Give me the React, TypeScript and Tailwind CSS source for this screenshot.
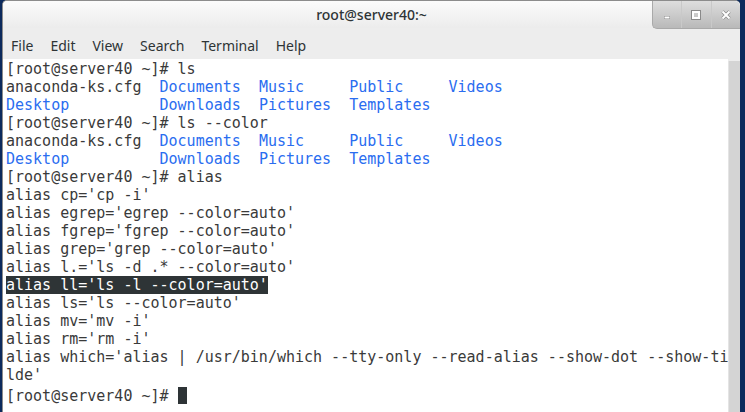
import React from "react"

const mono = { fontFamily: '"DejaVu Sans Mono", monospace' }

type Seg = { t: string; blue?: boolean }

const lsOut: Seg[][] = [
    [{ t: "anaconda-ks.cfg  " }, { t: "Documents", blue: true }, { t: "  " }, { t: "Music", blue: true }, { t: "     " }, { t: "Public", blue: true }, { t: "     " }, { t: "Videos", blue: true }],
    [{ t: "Desktop", blue: true }, { t: "          " }, { t: "Downloads", blue: true }, { t: "  " }, { t: "Pictures", blue: true }, { t: "  " }, { t: "Templates", blue: true }],
]

const aliases = [
    "alias cp='cp -i'",
    "alias egrep='egrep --color=auto'",
    "alias fgrep='fgrep --color=auto'",
    "alias grep='grep --color=auto'",
    "alias l.='ls -d .* --color=auto'",
]

const aliases2 = [
    "alias ls='ls --color=auto'",
    "alias mv='mv -i'",
    "alias rm='rm -i'",
    "alias which='alias | /usr/bin/which --tty-only --read-alias --show-dot --show-ti",
    "lde'",
]

function Line({ children }: { children: React.ReactNode }) {
    return <div className="h-[18px] leading-[18px] whitespace-pre">{children}</div>
}

function SegLine({ segs }: { segs: Seg[] }) {
    return (
        <Line>
            {segs.map((s, i) => (
                <span key={i} className={s.blue ? "text-[#2a6df0]" : ""}>
                    {s.t}
                </span>
            ))}
        </Line>
    )
}

function WinButtons() {
    return (
        <div className="flex h-[28px] w-[88px] rounded-bl-[5px] rounded-tr-[5px] border-l border-b border-[#a9a9a9] bg-gradient-to-b from-[#dedede] to-[#b9b9b9]">
            <div className="flex flex-1 items-center justify-center border-r border-[#c9c9c9]">
                <svg width="10" height="10" viewBox="0 0 10 10">
                    <rect x="2" y="6" width="6" height="3" fill="#8a8a8a" />
                    <rect x="2.5" y="6.5" width="5" height="2" fill="#ffffff" />
                </svg>
            </div>
            <div className="flex flex-1 items-center justify-center border-r border-[#c9c9c9]">
                <svg width="10" height="10" viewBox="0 0 10 10">
                    <rect x="1.5" y="1.5" width="7" height="7" fill="none" stroke="#8a8a8a" strokeWidth="3" />
                    <rect x="2" y="2" width="6" height="6" fill="none" stroke="#ffffff" strokeWidth="2" />
                </svg>
            </div>
            <div className="flex flex-1 items-center justify-center">
                <svg width="10" height="10" viewBox="0 0 10 10">
                    <path d="M1.5 1.5 L8.5 8.5 M8.5 1.5 L1.5 8.5" stroke="#8a8a8a" strokeWidth="3.2" />
                    <path d="M1.5 1.5 L8.5 8.5 M8.5 1.5 L1.5 8.5" stroke="#ffffff" strokeWidth="2" />
                </svg>
            </div>
        </div>
    )
}

export default function App() {
    const prompt = "[root@server40 ~]# "
    return (
        <div className="flex h-[412px] w-[745px] overflow-hidden bg-[#0c2a5c] pl-[2px] pr-[5px]">
            <div className="flex flex-1 flex-col overflow-hidden rounded-t-[5px] border-l border-t border-[#8c8c8c] bg-[#ededed]">
                {/* title bar */}
                <div className="flex h-[27px] bg-gradient-to-b from-[#fbfbfb] to-[#ececec]">
                    <div className="w-[88px]" />
                    <div
                        className="flex flex-1 items-center justify-center pb-[1px] text-[14px] font-medium text-[#2e3436]"
                        style={{ fontFamily: '"Noto Sans", sans-serif' }}
                    >
                        root@server40:~
                    </div>
                    <WinButtons />
                </div>
                {/* menu bar */}
                <div
                    className="flex h-[31px] items-center gap-[17px] pl-[8px] pt-[3px] text-[14px] text-[#2e3436]"
                    style={{ fontFamily: '"Noto Sans", sans-serif' }}
                >
                    <span>File</span>
                    <span>Edit</span>
                    <span>View</span>
                    <span>Search</span>
                    <span>Terminal</span>
                    <span>Help</span>
                </div>
                {/* terminal */}
                <div className="flex flex-1">
                    <div className="flex-1 bg-white pl-[3px] pt-[1px] text-[15px] text-[#3a3a3a]" style={mono}>
                        <Line>{prompt}ls</Line>
                        {lsOut.map((l, i) => (
                            <SegLine key={"a" + i} segs={l} />
                        ))}
                        <Line>{prompt}ls --color</Line>
                        {lsOut.map((l, i) => (
                            <SegLine key={"b" + i} segs={l} />
                        ))}
                        <Line>{prompt}alias</Line>
                        {aliases.map((a) => (
                            <Line key={a}>{a}</Line>
                        ))}
                        <Line>
                            <span className="bg-[#2e3436] text-white">alias ll='ls -l --color=auto'</span>
                        </Line>
                        {aliases2.map((a) => (
                            <Line key={a}>{a}</Line>
                        ))}
                        <Line>
                            {prompt}
                            <span className="inline-block h-[17px] w-[9px] translate-y-[3px] bg-[#2e3436]" />
                        </Line>
                    </div>
                    <div className="mt-[2px] w-[14px] border-l border-[#e4e4e4] bg-[#d4d4d4]" />
                </div>
            </div>
        </div>
    )
}
